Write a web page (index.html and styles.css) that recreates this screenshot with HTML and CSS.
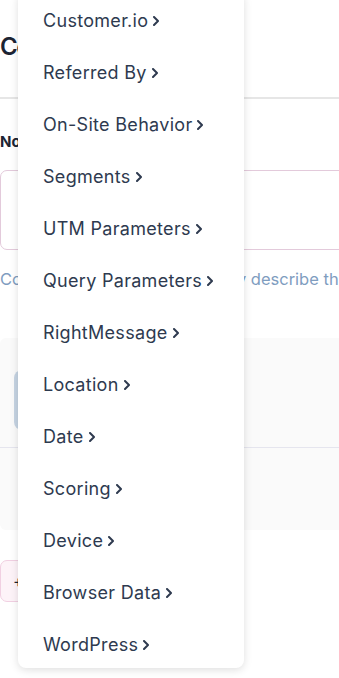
FILE: index.html
```html
<!DOCTYPE html>
<html lang="en">
  <head>
    <meta charset="UTF-8" />
    <meta name="viewport" content="width=device-width, initial-scale=1.0" />
    <title>Configure Rule</title>
    <link rel="stylesheet" href="styles.css">
  </head>
  <body>
    <div class="page">
      <div class="header">
        <h1>Configure rule</h1>
      </div>
      <div class="field">
        <label>Notes</label>
        <div class="input"></div>
        <p class="hint">Come up with a title that clearly describe this rule.</p>
      </div>
      <div class="panel">
        <div class="panel-row">
          <div class="select"></div>
        </div>
        <div class="panel-foot"></div>
      </div>
      <button class="add">+</button>
    </div>

    <ul class="menu">
      <li>Customer.io <svg viewBox="0 0 6 10"><path d="M1 1l4 4-4 4" /></svg></li>
      <li>Referred By <svg viewBox="0 0 6 10"><path d="M1 1l4 4-4 4" /></svg></li>
      <li>On-Site Behavior <svg viewBox="0 0 6 10"><path d="M1 1l4 4-4 4" /></svg></li>
      <li>Segments <svg viewBox="0 0 6 10"><path d="M1 1l4 4-4 4" /></svg></li>
      <li>UTM Parameters <svg viewBox="0 0 6 10"><path d="M1 1l4 4-4 4" /></svg></li>
      <li>Query Parameters <svg viewBox="0 0 6 10"><path d="M1 1l4 4-4 4" /></svg></li>
      <li>RightMessage <svg viewBox="0 0 6 10"><path d="M1 1l4 4-4 4" /></svg></li>
      <li>Location <svg viewBox="0 0 6 10"><path d="M1 1l4 4-4 4" /></svg></li>
      <li>Date <svg viewBox="0 0 6 10"><path d="M1 1l4 4-4 4" /></svg></li>
      <li>Scoring <svg viewBox="0 0 6 10"><path d="M1 1l4 4-4 4" /></svg></li>
      <li>Device <svg viewBox="0 0 6 10"><path d="M1 1l4 4-4 4" /></svg></li>
      <li>Browser Data <svg viewBox="0 0 6 10"><path d="M1 1l4 4-4 4" /></svg></li>
      <li>WordPress <svg viewBox="0 0 6 10"><path d="M1 1l4 4-4 4" /></svg></li>
    </ul>
  </body>
</html>
```

FILE: styles.css
```css
* {
  box-sizing: border-box;
  font-family: "Inter", "Noto Sans", sans-serif;
}
body {
  margin: 0;
  background: #fff;
  overflow: hidden;
}
.page {
  width: 420px;
}
.header {
  height: 99px;
  padding-top: 32px;
  border-bottom: 2px solid #e6e6e6;
}
h1 {
  margin: 0;
  font-size: 24px;
  font-weight: 600;
  letter-spacing: -1.5px;
  color: #1c2433;
  line-height: 30px;
}
.field {
  padding-top: 33px;
}
label {
  display: block;
  font-size: 15px;
  font-weight: 700;
  color: #1c2433;
  line-height: 20px;
}
.input {
  margin-top: 18px;
  height: 80px;
  border: 1px solid #e3cadb;
  border-radius: 7px;
}
.hint {
  margin: 19px 0 0;
  font-size: 16.5px;
  line-height: 20px;
  color: #7f9dbf;
  white-space: nowrap;
}
.panel {
  margin-top: 49px;
  height: 192px;
  background: #fafafa;
  border-radius: 6px;
  padding-top: 32px;
}
.panel-row {
  height: 78px;
  padding-left: 14px;
  border-bottom: 1px solid #e5e5ee;
}
.select {
  width: 120px;
  height: 60px;
  border-radius: 8px;
  background: #c6d4e3;
}
.add {
  margin-top: 30px;
  width: 60px;
  height: 42px;
  padding: 0 0 0 12px;
  text-align: left;
  border: 1px solid #f1d0e2;
  border-radius: 7px;
  background: #fdf3f8;
  color: #1c2433;
  font-size: 16px;
}
.menu {
  position: absolute;
  top: -8px;
  left: 18px;
  width: 226px;
  margin: 0;
  padding: 0;
  list-style: none;
  background: #fff;
  border-radius: 8px;
  box-shadow: 0 2px 8px rgba(0, 0, 0, 0.13);
}
.menu li {
  height: 52px;
  padding: 5px 0 0 25px;
  display: flex;
  align-items: center;
  gap: 5px;
  font-size: 18px;
  letter-spacing: 0.3px;
  color: #2e3a4f;
  white-space: nowrap;
}
.menu svg {
  width: 6px;
  height: 10px;
  fill: none;
  stroke: #2e3a4f;
  stroke-width: 2;
  stroke-linecap: round;
  stroke-linejoin: round;
}
```
